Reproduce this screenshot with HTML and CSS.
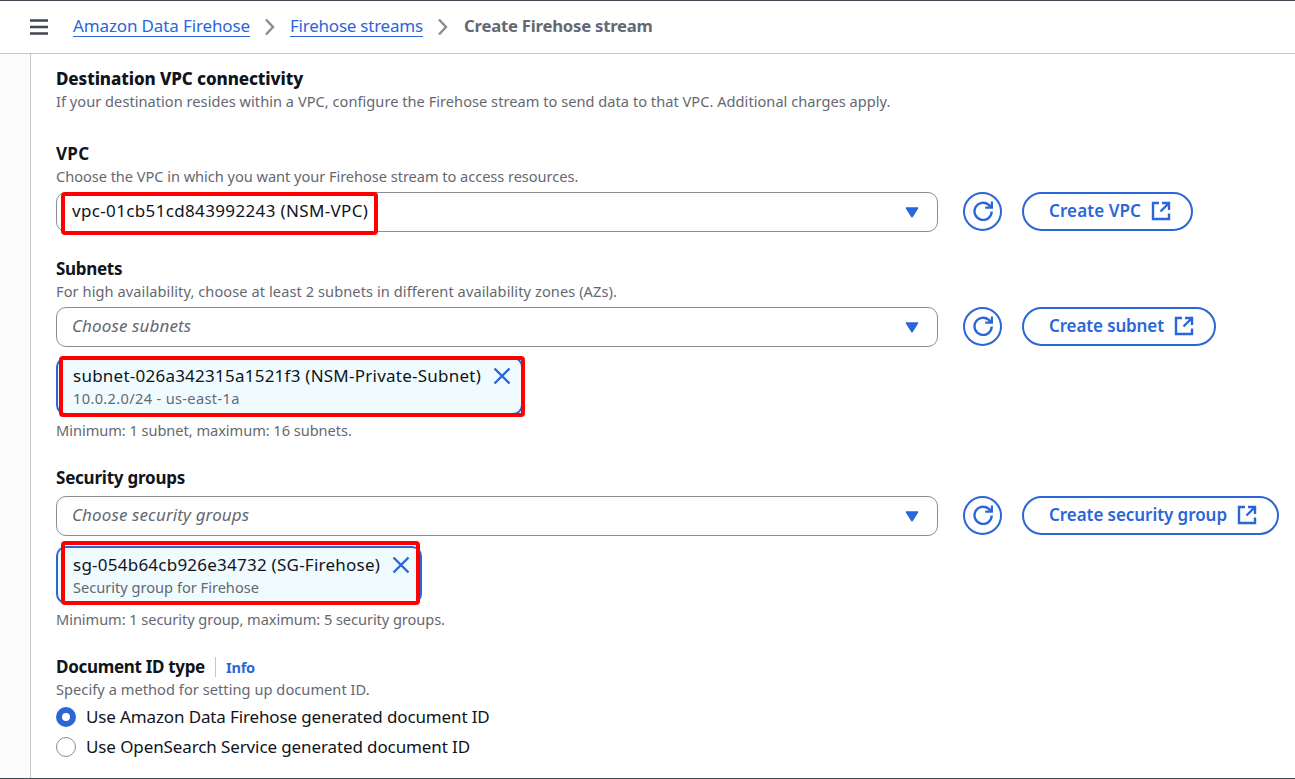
FILE: index.html
```html
<!DOCTYPE html>
<html lang="en">
<head>
<meta charset="utf-8">
<title>Create Firehose stream</title>
<link rel="stylesheet" href="styles.css">
</head>
<body>
<svg class="defs" width="0" height="0">
  <symbol id="refresh" viewBox="0 0 20 20"><path d="M18.700 10.500a8.600 8.600 0 1 1-2.900-6.600l2.600 2.200M19 .5v6.100h-6.800" fill="none" stroke="currentColor" stroke-width="2.400"/></symbol>
  <symbol id="external" viewBox="0 0 20 20"><path d="M8 2H2v16h16v-5.500M11 2h7v7M18 2 9.500 10.500" fill="none" stroke="currentColor" stroke-width="2.400"/></symbol>
  <symbol id="close" viewBox="0 0 18 18"><path d="M1.500 1.500l15 15M16.500 1.500l-15 15" fill="none" stroke="currentColor" stroke-width="2.400"/></symbol>
  <symbol id="caret" viewBox="0 0 14 11"><path d="M1.500 1h11L7 9.700z" fill="currentColor" stroke="currentColor" stroke-width="1.600" stroke-linejoin="round"/></symbol>
  <symbol id="chevron" viewBox="0 0 12 18"><path d="M2 1.500 9 9l-7 7.500" fill="none" stroke="currentColor" stroke-width="2.400"/></symbol>
</svg>
<div class="app">
  <header class="topbar">
    <svg class="menu" viewBox="0 0 18 16"><path d="M0 1.500h18M0 8h18M0 14.500h18" stroke="currentColor" stroke-width="2.300"/></svg>
    <nav class="crumbs">
      <a class="crumb-service">Amazon Data Firehose</a>
      <svg class="chev"><use href="#chevron"/></svg>
      <a class="crumb-streams">Firehose streams</a>
      <svg class="chev"><use href="#chevron"/></svg>
      <span class="current">Create Firehose stream</span>
    </nav>
  </header>
  <div class="body">
    <aside class="side"></aside>
    <main class="main">
      <section class="intro">
        <h2>Destination VPC connectivity</h2>
        <p class="desc t-intro">If your destination resides within a VPC, configure the Firehose stream to send data to that VPC. Additional charges apply.</p>
      </section>

      <section class="field compact">
        <h3 class="t-vpc">VPC</h3>
        <p class="desc t-access">Choose the VPC in which you want your Firehose stream to access resources.</p>
        <div class="row">
          <div class="select"><span class="t-vpcid">vpc-01cb51cd843992243 (NSM-VPC)</span><svg class="caret"><use href="#caret"/></svg>
            <div class="mark mark-vpc"></div></div>
          <button class="round"><svg class="ico"><use href="#refresh"/></svg></button>
          <button class="pill"><span class="t-bvpc">Create VPC</span><svg class="ico"><use href="#external"/></svg></button>
        </div>
      </section>

      <section class="field">
        <h3 class="t-subnets">Subnets</h3>
        <p class="desc t-az">For high availability, choose at least 2 subnets in different availability zones (AZs).</p>
        <div class="row">
          <div class="select placeholder"><span class="t-ph">Choose subnets</span><svg class="caret"><use href="#caret"/></svg></div>
          <button class="round"><svg class="ico"><use href="#refresh"/></svg></button>
          <button class="pill"><span class="t-bsubnet">Create subnet</span><svg class="ico"><use href="#external"/></svg></button>
        </div>
        <div class="token token-subnet">
          <div><div class="name">subnet-026a342315a1521f3 (NSM-Private-Subnet)</div><div class="desc t-cidr">10.0.2.0/24 - us-east-1a</div></div>
          <svg class="close"><use href="#close"/></svg>
          <div class="mark mark-subnet"></div>
        </div>
        <p class="desc hint">Minimum: 1 subnet, maximum: 16 subnets.</p>
      </section>

      <section class="field">
        <h3 class="t-sg">Security groups</h3>
        <div class="row">
          <div class="select placeholder"><span class="t-ph">Choose security groups</span><svg class="caret"><use href="#caret"/></svg></div>
          <button class="round"><svg class="ico"><use href="#refresh"/></svg></button>
          <button class="pill"><span class="t-bsg">Create security group</span><svg class="ico"><use href="#external"/></svg></button>
        </div>
        <div class="token token-sg">
          <div><div class="name">sg-054b64cb926e34732 (SG-Firehose)</div><div class="desc">Security group for Firehose</div></div>
          <svg class="close"><use href="#close"/></svg>
          <div class="mark mark-sg"></div>
        </div>
        <p class="desc hint t-sghint">Minimum: 1 security group, maximum: 5 security groups.</p>
      </section>

      <section class="field">
        <div class="heading"><h3 class="t-doc">Document ID type</h3><a class="info">Info</a></div>
        <p class="desc t-spec">Specify a method for setting up document ID.</p>
        <div class="options">
          <label class="option"><span class="radio checked"></span><span class="t-opt1">Use Amazon Data Firehose generated document ID</span></label>
          <label class="option"><span class="radio"></span><span class="t-opt2">Use OpenSearch Service generated document ID</span></label>
        </div>
      </section>
    </main>
  </div>
</div>
</body>
</html>
```
FILE: styles.css
```css
* { box-sizing: border-box; }
body { margin: 0; background: #fff; color: #0f141a; font: 17px/25px "Noto Sans", sans-serif; }
h2, h3, p { margin: 0; }
svg { display: block; flex: none; }
.defs { position: absolute; }
.app { height: 779px; display: flex; flex-direction: column; border-top: 1px solid #424650; border-bottom: 1px solid #424650; overflow: hidden; }

.topbar { height: 53px; flex: none; display: flex; align-items: center; padding: 0 0 3px 30px; border-bottom: 1px solid #c6c6cd; }
.menu { width: 18px; height: 16px; color: #424650; margin-top: 3px; }
.crumbs { display: flex; align-items: center; margin-left: 25px; white-space: nowrap; }
.crumbs a { color: #2b66d9; border-bottom: 1px solid #2b66d9; line-height: 20px; margin-top: 2px; }
.crumb-service { width: 177px; letter-spacing: -.13px; }
.crumb-streams { width: 133px; letter-spacing: -.23px; }
.chev { width: 12px; height: 18px; color: #8c8c94; margin: 3px 14px 0; }
.current { color: #656871; font-weight: 700; font-size: 16.7px; letter-spacing: -.22px; margin-left: 1px; }

.body { flex: 1; display: flex; min-height: 0; }
.side { width: 31px; flex: none; background: #fbfbfb; border-right: 1px solid #c6c6cd; }
.main { flex: 1; padding: 12px 0 0 25px; display: flex; flex-direction: column; gap: 25px; white-space: nowrap; }
.intro { padding-bottom: 5px; }
.compact { margin-bottom: -1px; }
h2 { font-size: 17px; font-weight: 800; letter-spacing: -.09px; line-height: 25px; }
h3 { font-size: 17px; font-weight: 700; line-height: 25px; }
.desc { font-size: 14.6px; line-height: 20px; color: #656871; }

.row { display: flex; align-items: flex-start; margin-top: 6px; }
.select { position: relative; width: 882px; height: 40px; border: 1px solid #8c8c94; border-radius: 10px; padding: 0 18px 4px 15px; display: flex; align-items: center; justify-content: space-between; }
.caret { width: 14px; height: 11px; color: #2b66d9; margin-top: 4px; }
.placeholder { color: #656871; font-style: italic; }
button { font: 600 17px/25px "Noto Sans", sans-serif; color: #2b66d9; background: #fff; border: 2px solid #2b66d9; height: 39px; border-radius: 20px; display: flex; align-items: center; }
.round { width: 39px; padding: 0 0 2px; justify-content: center; margin-left: 25px; }
.pill { margin-left: 20px; padding: 0 20px 1px 25px; gap: 10px; }
.pill span { padding-bottom: 2px; }
.ico { width: 20px; height: 20px; }

.token { position: relative; height: 58px; margin-top: 10px; border: 2px solid #2b66d9; border-radius: 10px; background: #f0fbff; padding: 4px 0 0 15px; display: flex; }
.token-subnet { width: 467px; }
.token-sg { width: 366px; }
.name { letter-spacing: .24px; }
.close { width: 18px; height: 18px; color: #2b66d9; position: absolute; right: 10px; top: 8px; }
.hint { margin-top: 5px; letter-spacing: -.04px; }
.mark { position: absolute; border: 4px solid #f00; border-radius: 4px; }
.mark-vpc { left: 4px; top: -1px; width: 317px; height: 43px; }
.mark-subnet { left: 1px; top: -3px; width: 466px; height: 61px; }
.mark-sg { left: 3px; top: -7px; width: 359px; height: 64px; }

.heading { display: flex; align-items: center; }
.info { color: #2b66d9; font-weight: 700; font-size: 14.6px; line-height: 20px; letter-spacing: -.25px; margin-left: 10px; padding-left: 10px; border-left: 1px solid #c6c6cd; }
.options { display: flex; flex-direction: column; gap: 5px; margin-top: 5px; }
.option { display: flex; align-items: center; gap: 10px; height: 25px; }
.radio { width: 20px; height: 20px; border-radius: 50%; border: 1px solid #8c8c94; }
.radio.checked { border: 6px solid #2b66d9; }

.t-intro { letter-spacing: .03px; }
.t-access { letter-spacing: -.04px; }
.t-vpc { letter-spacing: .3px; }
.t-vpcid { letter-spacing: .35px; }
.t-subnets { letter-spacing: -.3px; }
.t-az { letter-spacing: .08px; }
.t-cidr { letter-spacing: .34px; }
.t-sg { letter-spacing: -.23px; }
.t-sghint { letter-spacing: -.06px; }
.t-doc { width: 149px; letter-spacing: -.31px; }
.t-spec { letter-spacing: .05px; }
.t-ph { letter-spacing: .12px; }
.t-opt1 { letter-spacing: -.13px; }
.t-opt2 { letter-spacing: -.11px; }
.t-bvpc { letter-spacing: .1px; }
.t-bsubnet { letter-spacing: -.13px; }
.t-bsg { letter-spacing: -.06px; }
```
